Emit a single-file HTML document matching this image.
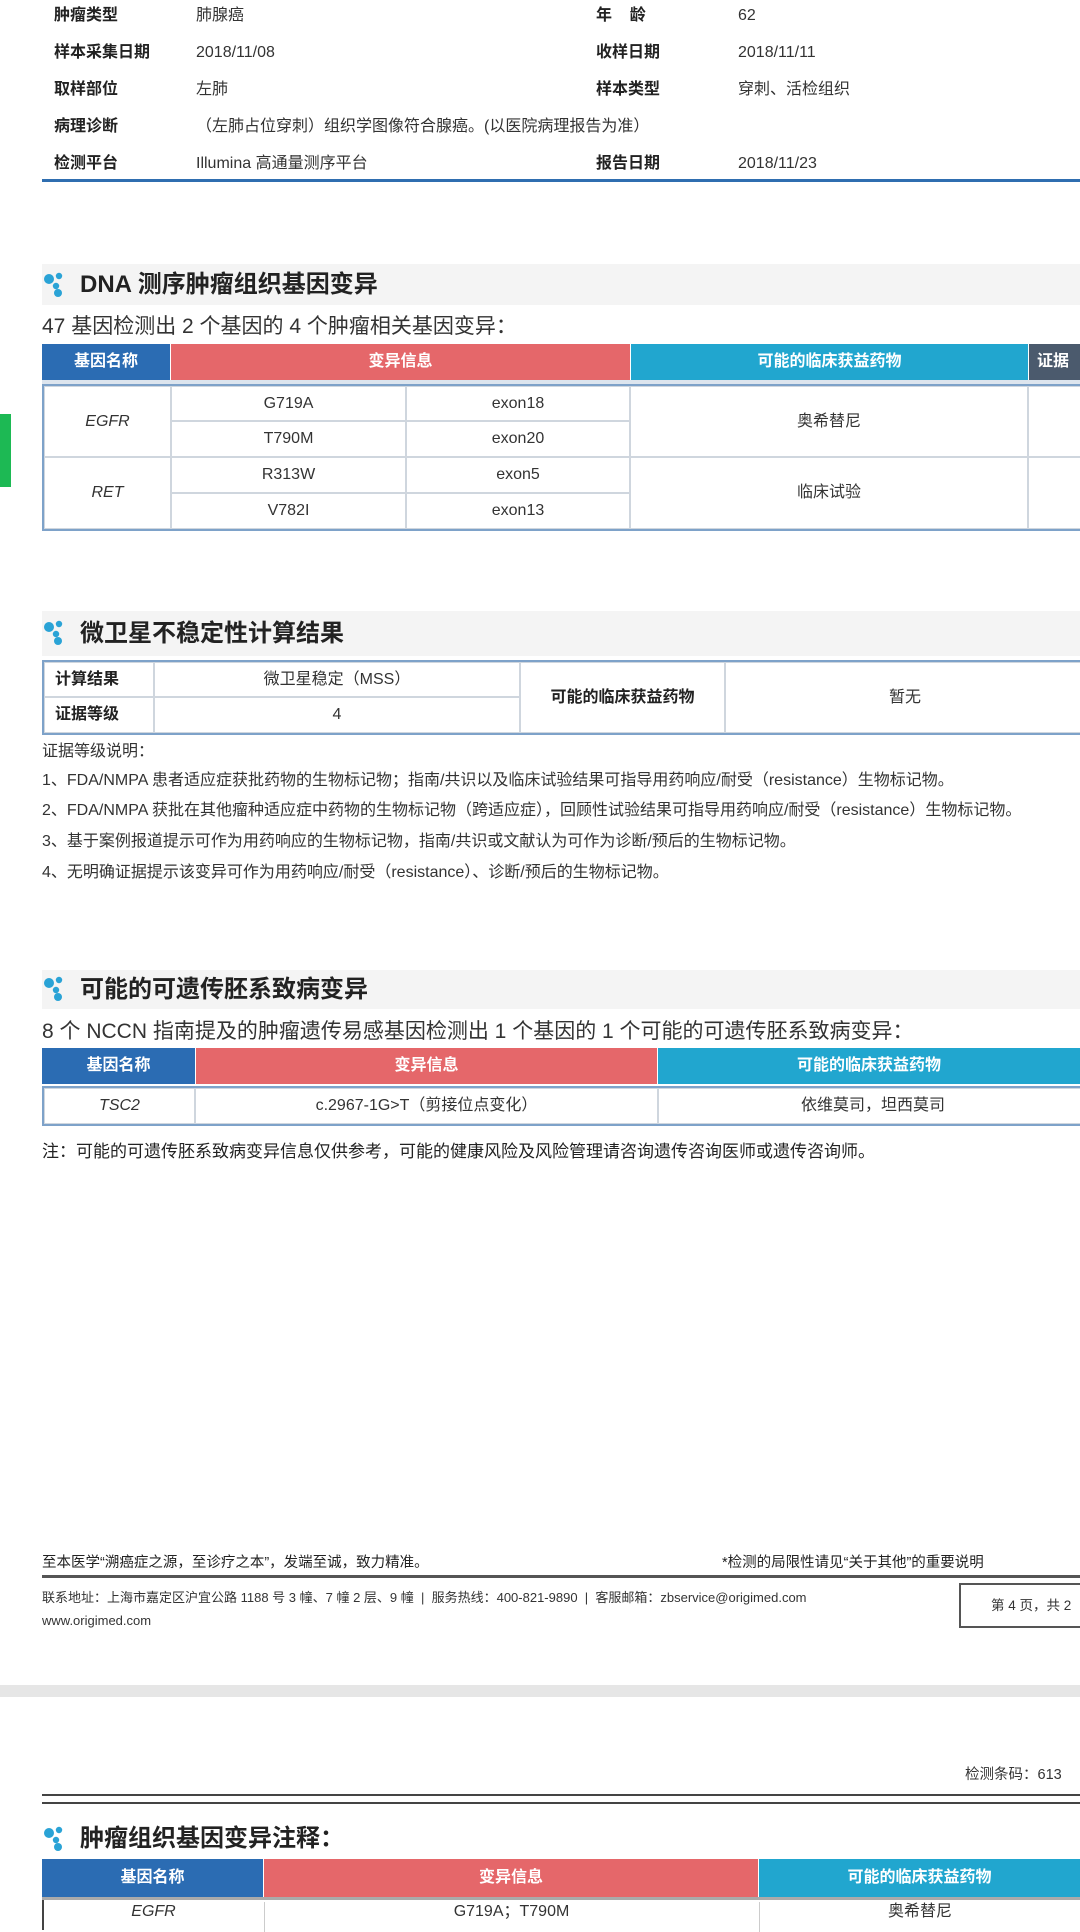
<!DOCTYPE html>
<html><head><meta charset="utf-8"><style>
*{margin:0;padding:0;box-sizing:border-box}
body{width:1080px;height:1920px;background:#fff;position:relative;overflow:hidden;font-family:"Liberation Sans","Noto Sans CJK SC",sans-serif;color:#333}
.a{position:absolute;white-space:nowrap;line-height:22px}
.lb{font-weight:bold;font-size:16px;color:#222}
.v{font-size:16px;color:#333}
.band{position:absolute;left:42px;width:1038px;background:#f4f4f4}
.ttl{position:absolute;left:80px;font-size:24px;line-height:30px;font-weight:bold;color:#222;white-space:nowrap}
.ic{position:absolute;left:43px}
.cell{position:absolute;display:flex;align-items:center;justify-content:center;font-size:16px;line-height:20px;white-space:nowrap}
.h{color:#fff;font-weight:bold}
.bl{background:#2b6cb3}.rd{background:#e5676a}.cy{background:#21a6cf}.dk{background:#4b5a6d}
.bd{border:1px solid #cfd6de}
</style></head><body>
<div class="a lb" style="left:54px;top:5px">肿瘤类型</div><div class="a v" style="left:196px;top:5px">肺腺癌</div>
<div class="a lb" style="left:596px;top:5px">年&nbsp;&nbsp;&nbsp;&nbsp;龄</div><div class="a v" style="left:738px;top:5px">62</div>
<div class="a lb" style="left:54px;top:42px">样本采集日期</div><div class="a v" style="left:196px;top:42px">2018/11/08</div>
<div class="a lb" style="left:596px;top:42px">收样日期</div><div class="a v" style="left:738px;top:42px">2018/11/11</div>
<div class="a lb" style="left:54px;top:79px">取样部位</div><div class="a v" style="left:196px;top:79px">左肺</div>
<div class="a lb" style="left:596px;top:79px">样本类型</div><div class="a v" style="left:738px;top:79px">穿刺、活检组织</div>
<div class="a lb" style="left:54px;top:116px">病理诊断</div><div class="a v" style="left:196px;top:116px">（左肺占位穿刺）组织学图像符合腺癌。(以医院病理报告为准）</div>
<div class="a lb" style="left:54px;top:153px">检测平台</div><div class="a v" style="left:196px;top:153px">Illumina 高通量测序平台</div>
<div class="a lb" style="left:596px;top:153px">报告日期</div><div class="a v" style="left:738px;top:153px">2018/11/23</div>
<div class="a" style="left:42px;top:179px;width:1038px;height:3px;background:#2f6eb0"></div>

<div class="band" style="top:264px;height:41px"></div>
<svg class="ic" style="top:272px" width="22" height="26" viewBox="0 0 22 26"><circle cx="6" cy="7" r="5" fill="#2aa3d6"/><circle cx="16" cy="4" r="3.2" fill="#2aa3d6"/><circle cx="13" cy="14" r="3.2" fill="#2aa3d6"/><circle cx="15" cy="21" r="4" fill="#2aa3d6"/></svg>
<div class="ttl" style="top:270px">DNA 测序肿瘤组织基因变异</div>
<div class="a" style="left:42px;top:314px;font-size:21px;line-height:26px;color:#333">47 基因检测出 2 个基因的 4 个肿瘤相关基因变异：</div>
<div class="cell h bl" style="left:42px;top:344px;width:128px;height:36px">基因名称</div>
<div class="cell h rd" style="left:171px;top:344px;width:459px;height:36px">变异信息</div>
<div class="cell h cy" style="left:631px;top:344px;width:397px;height:36px">可能的临床获益药物</div>
<div class="cell h dk" style="left:1029px;top:344px;width:60px;height:36px;justify-content:flex-start;padding-left:8px">证据</div>
<div class="a" style="left:42px;top:380px;width:1038px;height:4px;background:#dde5ee"></div>
<div class="a" style="left:42px;top:384px;width:1040px;height:147px;border:2px solid #7ea2c9;border-right:none"></div>
<div class="cell bd" style="left:44px;top:386px;width:127px;height:71px;font-style:italic">EGFR</div>
<div class="cell bd" style="left:44px;top:457px;width:127px;height:72px;font-style:italic">RET</div>
<div class="cell bd" style="left:171px;top:386px;width:235px;height:35px">G719A</div>
<div class="cell bd" style="left:406px;top:386px;width:224px;height:35px">exon18</div>
<div class="cell bd" style="left:171px;top:421px;width:235px;height:36px">T790M</div>
<div class="cell bd" style="left:406px;top:421px;width:224px;height:36px">exon20</div>
<div class="cell bd" style="left:171px;top:457px;width:235px;height:36px">R313W</div>
<div class="cell bd" style="left:406px;top:457px;width:224px;height:36px">exon5</div>
<div class="cell bd" style="left:171px;top:493px;width:235px;height:36px">V782I</div>
<div class="cell bd" style="left:406px;top:493px;width:224px;height:36px">exon13</div>
<div class="cell bd" style="left:630px;top:386px;width:398px;height:71px">奥希替尼</div>
<div class="cell bd" style="left:630px;top:457px;width:398px;height:72px">临床试验</div>
<div class="cell bd" style="left:1028px;top:386px;width:60px;height:71px"></div>
<div class="cell bd" style="left:1028px;top:457px;width:60px;height:72px"></div>
<div class="a" style="left:0;top:414px;width:11px;height:73px;background:#1db954"></div>

<div class="band" style="top:611px;height:45px"></div>
<svg class="ic" style="top:620px" width="22" height="26" viewBox="0 0 22 26"><circle cx="6" cy="7" r="5" fill="#2aa3d6"/><circle cx="16" cy="4" r="3.2" fill="#2aa3d6"/><circle cx="13" cy="14" r="3.2" fill="#2aa3d6"/><circle cx="15" cy="21" r="4" fill="#2aa3d6"/></svg>
<div class="ttl" style="top:619px">微卫星不稳定性计算结果</div>
<div class="a" style="left:42px;top:660px;width:1040px;height:75px;border:2px solid #7ea2c9;border-right:none"></div>
<div class="cell bd lb" style="left:44px;top:662px;width:110px;height:35px;justify-content:flex-start;padding-left:10px">计算结果</div>
<div class="cell bd" style="left:154px;top:662px;width:366px;height:35px">微卫星稳定（MSS）</div>
<div class="cell bd lb" style="left:44px;top:697px;width:110px;height:36px;justify-content:flex-start;padding-left:10px">证据等级</div>
<div class="cell bd" style="left:154px;top:697px;width:366px;height:36px">4</div>
<div class="cell bd lb" style="left:520px;top:662px;width:205px;height:71px">可能的临床获益药物</div>
<div class="cell bd" style="left:725px;top:662px;width:360px;height:71px">暂无</div>
<div class="a v" style="left:42px;top:741px">证据等级说明：</div>
<div class="a v" style="left:42px;top:770px">1、FDA/NMPA 患者适应症获批药物的生物标记物；指南/共识以及临床试验结果可指导用药响应/耐受（resistance）生物标记物。</div>
<div class="a v" style="left:42px;top:800px">2、FDA/NMPA 获批在其他瘤种适应症中药物的生物标记物（跨适应症），回顾性试验结果可指导用药响应/耐受（resistance）生物标记物。</div>
<div class="a v" style="left:42px;top:831px">3、基于案例报道提示可作为用药响应的生物标记物，指南/共识或文献认为可作为诊断/预后的生物标记物。</div>
<div class="a v" style="left:42px;top:862px">4、无明确证据提示该变异可作为用药响应/耐受（resistance）、诊断/预后的生物标记物。</div>

<div class="band" style="top:970px;height:39px"></div>
<svg class="ic" style="top:976px" width="22" height="26" viewBox="0 0 22 26"><circle cx="6" cy="7" r="5" fill="#2aa3d6"/><circle cx="16" cy="4" r="3.2" fill="#2aa3d6"/><circle cx="13" cy="14" r="3.2" fill="#2aa3d6"/><circle cx="15" cy="21" r="4" fill="#2aa3d6"/></svg>
<div class="ttl" style="top:975px">可能的可遗传胚系致病变异</div>
<div class="a" style="left:42px;top:1019px;font-size:21px;line-height:26px;color:#333">8 个 NCCN 指南提及的肿瘤遗传易感基因检测出 1 个基因的 1 个可能的可遗传胚系致病变异：</div>
<div class="cell h bl" style="left:42px;top:1048px;width:153px;height:36px">基因名称</div>
<div class="cell h rd" style="left:196px;top:1048px;width:461px;height:36px">变异信息</div>
<div class="cell h cy" style="left:658px;top:1048px;width:422px;height:36px">可能的临床获益药物</div>
<div class="a" style="left:42px;top:1086px;width:1040px;height:40px;border:2px solid #7ea2c9;border-right:none"></div>
<div class="cell bd" style="left:44px;top:1088px;width:151px;height:36px;font-style:italic">TSC2</div>
<div class="cell bd" style="left:195px;top:1088px;width:463px;height:36px">c.2967-1G&gt;T（剪接位点变化）</div>
<div class="cell bd" style="left:658px;top:1088px;width:430px;height:36px">依维莫司，坦西莫司</div>
<div class="a" style="left:42px;top:1141px;font-size:17px;color:#222">注：可能的可遗传胚系致病变异信息仅供参考，可能的健康风险及风险管理请咨询遗传咨询医师或遗传咨询师。</div>

<div class="a" style="left:42px;top:1552px;font-size:14.5px;color:#222">至本医学“溯癌症之源，至诊疗之本”，发端至诚，致力精准。</div>
<div class="a" style="left:722px;top:1552px;font-size:14.5px;color:#222">*检测的局限性请见“关于其他”的重要说明</div>
<div class="a" style="left:42px;top:1575px;width:1038px;height:3px;background:#555"></div>
<div class="a" style="left:42px;top:1587px;font-size:13px;color:#333">联系地址：上海市嘉定区沪宜公路 1188 号 3 幢、7 幢 2 层、9 幢 &nbsp;|&nbsp; 服务热线：400-821-9890 &nbsp;|&nbsp; 客服邮箱：zbservice@origimed.com</div>
<div class="a" style="left:42px;top:1610px;font-size:13px;color:#333">www.origimed.com</div>
<div class="a" style="left:959px;top:1583px;width:140px;height:45px;border:2px solid #555;font-size:13.5px;padding:10px 0 0 30px;color:#333">第 4 页，共 2</div>
<div class="a" style="left:0;top:1685px;width:1080px;height:12px;background:#e6e6e6"></div>

<div class="a" style="left:965px;top:1764px;font-size:14.5px;color:#333">检测条码：613</div>
<div class="a" style="left:42px;top:1794px;width:1038px;height:2px;background:#444"></div>
<div class="a" style="left:42px;top:1802px;width:1038px;height:2px;background:#444"></div>
<svg class="ic" style="top:1826px" width="22" height="26" viewBox="0 0 22 26"><circle cx="6" cy="7" r="5" fill="#2aa3d6"/><circle cx="16" cy="4" r="3.2" fill="#2aa3d6"/><circle cx="13" cy="14" r="3.2" fill="#2aa3d6"/><circle cx="15" cy="21" r="4" fill="#2aa3d6"/></svg>
<div class="ttl" style="top:1824px">肿瘤组织基因变异注释：</div>
<div class="cell h bl" style="left:42px;top:1859px;width:221px;height:38px">基因名称</div>
<div class="cell h rd" style="left:264px;top:1859px;width:494px;height:38px">变异信息</div>
<div class="cell h cy" style="left:759px;top:1859px;width:321px;height:38px">可能的临床获益药物</div>
<div class="a" style="left:42px;top:1897px;width:1038px;height:3px;background:#aaa"></div>
<div class="a" style="left:42px;top:1900px;width:1040px;height:30px;border-left:2px solid #444"></div>
<div class="cell" style="left:44px;top:1902px;width:219px;height:30px;font-style:italic;align-items:flex-start">EGFR</div>
<div class="cell" style="left:264px;top:1902px;width:494px;height:30px;align-items:flex-start;border-left:1px solid #ccc">G719A；T790M</div>
<div class="cell" style="left:759px;top:1902px;width:321px;height:30px;align-items:flex-start;border-left:1px solid #ccc">奥希替尼</div>
</body></html>
